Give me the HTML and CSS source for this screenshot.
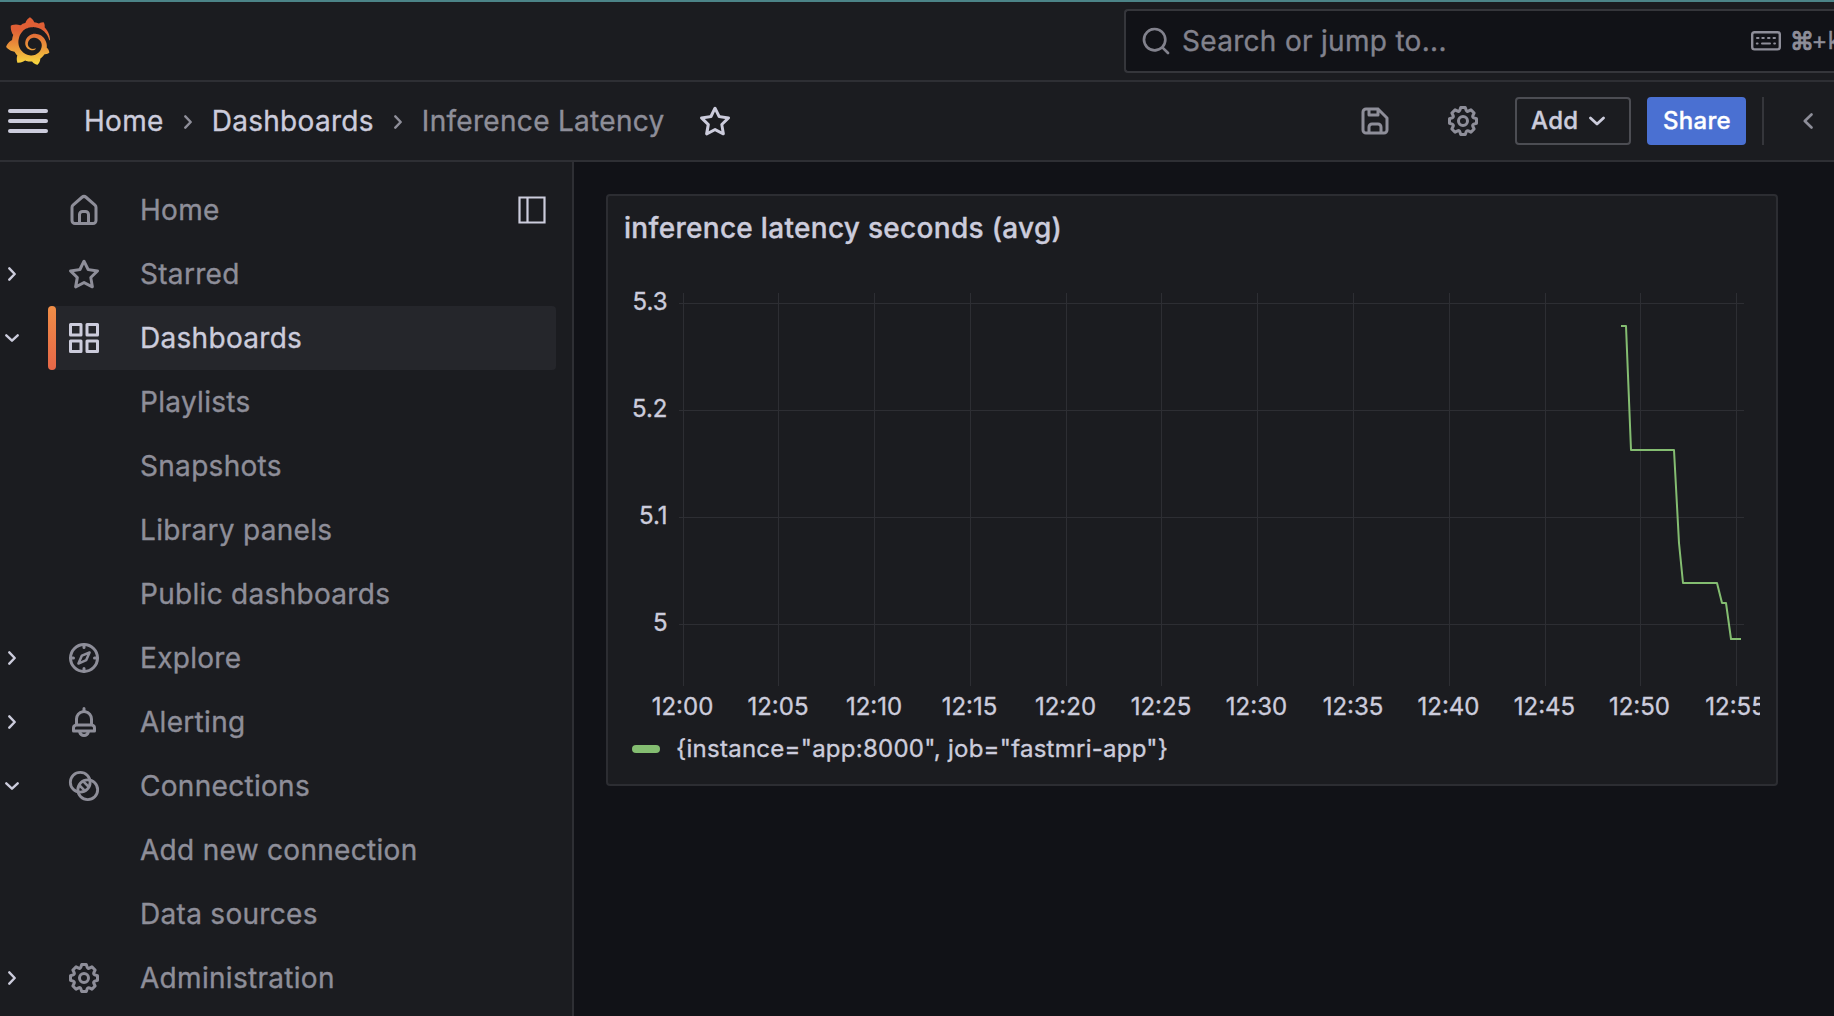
FILE: index.html
```html
<!DOCTYPE html>
<html lang="en">
<head>
<meta charset="utf-8">
<title>Inference Latency - Dashboards - Grafana</title>
<link rel="stylesheet" href="styles.css">
</head>
<body>
<svg class="sprite" aria-hidden="true">
  <symbol id="cog" viewBox="0 0 24 24"><path d="M21.32,9.55l-1.89-.63.89-1.78A1,1,0,0,0,20.13,6L18,3.87a1,1,0,0,0-1.15-.19l-1.78.89-.63-1.89A1,1,0,0,0,13.5,2h-3a1,1,0,0,0-.95.68L8.92,4.57,7.14,3.68A1,1,0,0,0,6,3.87L3.87,6a1,1,0,0,0-.19,1.15l.89,1.78-1.89.63A1,1,0,0,0,2,10.5v3a1,1,0,0,0,.68.95l1.89.63-.89,1.78A1,1,0,0,0,3.87,18L6,20.13a1,1,0,0,0,1.15.19l1.78-.89.63,1.89a1,1,0,0,0,.95.68h3a1,1,0,0,0,.95-.68l.63-1.89,1.78.89A1,1,0,0,0,18,20.13L20.13,18a1,1,0,0,0,.19-1.15l-.89-1.78,1.89-.63A1,1,0,0,0,22,13.5v-3A1,1,0,0,0,21.32,9.55ZM20,12.78l-1.2.4A2,2,0,0,0,17.64,16l.57,1.14-1.1,1.1L16,17.64a2,2,0,0,0-2.79,1.16l-.4,1.2H11.22l-.4-1.2A2,2,0,0,0,8,17.64l-1.14.57-1.1-1.1L6.36,16A2,2,0,0,0,5.2,13.18L4,12.78V11.22l1.2-.4A2,2,0,0,0,6.36,8L5.79,6.89l1.1-1.1L8,6.36A2,2,0,0,0,10.82,5.2l.4-1.2h1.56l.4,1.2A2,2,0,0,0,16,6.36l1.14-.57,1.1,1.1L17.64,8a2,2,0,0,0,1.16,2.79l1.2.4ZM12,8a4,4,0,1,0,4,4A4,4,0,0,0,12,8Zm0,6a2,2,0,1,1,2-2A2,2,0,0,1,12,14Z"/></symbol>
  <symbol id="star" viewBox="0 0 24 24"><path d="M22,9.67A1,1,0,0,0,21.14,9l-5.69-.83L12.9,3a1,1,0,0,0-1.8,0L8.55,8.16,2.86,9a1,1,0,0,0-.81.68,1,1,0,0,0,.25,1l4.13,4-1,5.68A1,1,0,0,0,6.9,21.44L12,18.77l5.1,2.67a.93.93,0,0,0,.46.12,1,1,0,0,0,.59-.19,1,1,0,0,0,.4-1l-1-5.68,4.13-4A1,1,0,0,0,22,9.67Zm-6.15,4a1,1,0,0,0-.29.88l.72,4.2-3.76-2a1.06,1.06,0,0,0-.94,0l-3.76,2,.72-4.2a1,1,0,0,0-.29-.88l-3-3,4.21-.61a1,1,0,0,0,.76-.55L12,5.7l1.88,3.82a1,1,0,0,0,.76.55l4.21.61Z"/></symbol>
  <symbol id="right" viewBox="0 0 8 14"><path class="line caret-line" d="M1.3 1.300 6.700 7 1.300 12.700"/></symbol>
  <symbol id="down" viewBox="0 0 14 8"><path class="line caret-line" d="M1.300 1.300 7 6.700 12.700 1.300"/></symbol>
</svg>

<header class="topbar">
  <svg class="logo" viewBox="0 0 351 365">
    <defs><linearGradient id="sun" gradientUnits="userSpaceOnUse" x1="175" y1="365" x2="175" y2="10"><stop offset="0" stop-color="#f8dc3f"/><stop offset=".3" stop-color="#eda33c"/><stop offset=".75" stop-color="#e05f35"/><stop offset="1" stop-color="#e05f35"/></linearGradient></defs>
    <path fill="url(#sun)" d="M342,161.2c-0.6-6.1-1.6-13.1-3.6-20.9c-2-7.7-5-16.2-9.4-25c-4.4-8.8-10.1-17.9-17.5-26.8c-2.9-3.5-6.1-6.9-9.5-10.2c5.1-20.3-6.2-37.9-6.2-37.9c-19.5-1.2-31.9,6.1-36.5,9.4c-0.8-0.3-1.5-0.7-2.3-1c-3.3-1.3-6.7-2.6-10.3-3.7c-3.5-1.1-7.1-2.1-10.8-3c-3.7-0.9-7.4-1.6-11.2-2.2c-0.7-0.1-1.3-0.2-2-0.3c-8.5-27.2-32.9-38.6-32.9-38.6c-27.3,17.3-32.4,41.5-32.4,41.5s-0.1,0.5-0.3,1.4c-1.5,0.4-3,0.9-4.5,1.3c-2.1,0.6-4.2,1.4-6.2,2.2c-2.1,0.8-4.1,1.6-6.2,2.5c-4.1,1.8-8.2,3.8-12.2,6c-3.9,2.2-7.7,4.6-11.4,7.1c-0.5-0.2-1-0.4-1-0.4c-37.8-14.4-71.3,2.9-71.3,2.9c-3.1,40.2,15.1,65.5,18.7,70.1c-0.9,2.5-1.7,5-2.5,7.5c-2.8,9.1-4.9,18.4-6.2,28.1c-0.2,1.4-0.4,2.8-0.5,4.2C18.8,192.7,8.5,228,8.5,228c29.1,33.5,63.1,35.6,63.1,35.6c0,0,0.1-0.1,0.1-0.1c4.3,7.7,9.3,15,14.9,21.9c2.4,2.9,4.8,5.6,7.4,8.3c-10.6,30.4,1.5,55.6,1.5,55.6c32.4,1.2,53.7-14.2,58.2-17.7c3.2,1.1,6.5,2.1,9.8,2.9c10,2.6,20.2,4.1,30.4,4.5c2.5,0.1,5.1,0.2,7.6,0.1l1.2,0l0.8,0l1.6,0l1.6-0.1l0,0.1c15.3,21.8,42.1,24.9,42.1,24.9c19.1-20.1,20.2-40.1,20.2-44.4l0,0c0,0,0-0.1,0-0.3c0-0.4,0-0.6,0-0.6l0,0c0-0.3,0-0.6,0-0.9c4-2.8,7.8-5.8,11.4-9.1c7.6-6.9,14.3-14.8,19.9-23.3c0.5-0.8,1-1.6,1.5-2.4c21.6,1.2,36.9-13.4,36.9-13.4c-3.6-22.5-16.4-33.5-19.1-35.6l0,0c0,0-0.1-0.1-0.3-0.2c-0.2-0.1-0.2-0.2-0.2-0.2c0,0,0,0,0,0c-0.1-0.1-0.3-0.2-0.5-0.3c0.1-1.4,0.2-2.7,0.3-4.1c0.2-2.4,0.2-4.9,0.2-7.3l0-1.8l0-0.9l0-0.5c0-0.6,0-0.4,0-0.6l-0.1-1.5l-0.1-2c0-0.7-0.1-1.3-0.2-1.9c-0.1-0.6-0.1-1.3-0.2-1.9l-0.2-1.9l-0.3-1.9c-0.4-2.5-0.8-4.9-1.4-7.4c-2.3-9.7-6.1-18.9-11-27.2c-5-8.3-11.2-15.6-18.3-21.8c-7-6.2-14.9-11.2-23.1-14.9c-8.3-3.7-16.9-6.1-25.5-7.2c-4.3-0.6-8.6-0.8-12.9-0.7l-1.6,0l-0.4,0c-0.1,0-0.6,0-0.5,0l-0.7,0l-1.6,0.1c-0.6,0-1.2,0.1-1.7,0.1c-2.2,0.2-4.4,0.5-6.5,0.9c-8.6,1.6-16.7,4.7-23.8,9c-7.1,4.3-13.3,9.6-18.3,15.6c-5,6-8.9,12.7-11.6,19.6c-2.7,6.9-4.2,14.1-4.6,21c-0.1,1.7-0.1,3.5-0.1,5.2c0,0.4,0,0.9,0,1.3l0.1,1.4c0.1,0.8,0.1,1.7,0.2,2.5c0.3,3.5,1,6.9,1.9,10.1c1.9,6.5,4.9,12.4,8.6,17.4c3.7,5,8.2,9.1,12.9,12.4c4.7,3.2,9.8,5.5,14.8,7c5,1.5,10,2.1,14.7,2.1c0.6,0,1.2,0,1.7,0c0.3,0,0.6,0,0.9,0c0.3,0,0.6,0,0.9-0.1c0.5,0,1-0.1,1.5-0.1c0.1,0,0.3,0,0.4-0.1l0.5-0.1c0.3,0,0.6-0.1,0.9-0.1c0.6-0.1,1.1-0.2,1.7-0.3c0.6-0.1,1.1-0.2,1.6-0.4c1.1-0.2,2.1-0.6,3.1-0.9c2-0.7,4-1.5,5.7-2.4c1.8-0.9,3.4-2,5-3c0.4-0.3,0.9-0.6,1.3-1c1.6-1.3,1.9-3.7,0.6-5.3c-1.1-1.4-3.1-1.8-4.7-0.9c-0.4,0.2-0.8,0.4-1.2,0.6c-1.4,0.7-2.8,1.3-4.3,1.8c-1.5,0.5-3.1,0.9-4.7,1.2c-0.8,0.1-1.6,0.2-2.5,0.3c-0.4,0-0.8,0.1-1.3,0.1c-0.4,0-0.9,0-1.2,0c-0.4,0-0.8,0-1.2,0c-0.5,0-1,0-1.5-0.1c0,0-0.3,0-0.1,0l-0.2,0l-0.3,0c-0.2,0-0.5,0-0.7-0.1c-0.5-0.1-0.9-0.1-1.4-0.2c-3.7-0.5-7.4-1.6-10.9-3.2c-3.6-1.6-7-3.8-10.1-6.6c-3.1-2.8-5.8-6.1-7.9-9.9c-2.1-3.8-3.6-8-4.3-12.4c-0.3-2.2-0.5-4.5-0.4-6.7c0-0.6,0.1-1.2,0.1-1.8c0,0.2,0-0.1,0-0.1l0-0.2l0-0.5c0-0.3,0.1-0.6,0.1-0.9c0.1-1.2,0.3-2.4,0.5-3.6c1.7-9.6,6.5-19,13.9-26.1c1.9-1.8,3.9-3.4,6-4.9c2.1-1.5,4.4-2.8,6.8-3.9c2.4-1.1,4.8-2,7.4-2.7c2.5-0.7,5.1-1.1,7.8-1.4c1.3-0.1,2.6-0.2,4-0.2c0.4,0,0.6,0,0.9,0l1.1,0l0.7,0c0.3,0,0,0,0.1,0l0.3,0l1.1,0.1c2.9,0.2,5.7,0.6,8.5,1.3c5.6,1.2,11.1,3.3,16.2,6.1c10.2,5.7,18.9,14.5,24.2,25.1c2.7,5.3,4.6,11,5.5,16.9c0.2,1.5,0.4,3,0.5,4.5l0.1,1.1l0.1,1.1c0,0.4,0,0.8,0,1.1c0,0.4,0,0.8,0,1.1l0,1l0,1.1c0,0.7-0.1,1.9-0.1,2.6c-0.1,1.6-0.3,3.3-0.5,4.9c-0.2,1.6-0.5,3.2-0.8,4.8c-0.3,1.6-0.7,3.2-1.1,4.7c-0.8,3.1-1.8,6.2-3,9.3c-2.4,6-5.6,11.8-9.4,17.1c-7.7,10.6-18.2,19.2-30.2,24.7c-6,2.7-12.3,4.7-18.8,5.7c-3.2,0.6-6.5,0.9-9.8,1l-0.6,0l-0.5,0l-1.1,0l-1.6,0l-0.8,0c0.4,0-0.1,0-0.1,0l-0.3,0c-1.8,0-3.5-0.1-5.3-0.3c-7-0.5-13.9-1.8-20.7-3.7c-6.7-1.9-13.2-4.6-19.4-7.8c-12.3-6.6-23.4-15.6-32-26.5c-4.3-5.4-8.1-11.3-11.2-17.4c-3.1-6.1-5.6-12.6-7.4-19.1c-1.8-6.6-2.9-13.3-3.4-20.1l-0.1-1.3l0-0.3l0-0.3l0-0.6l0-1.1l0-0.3l0-0.4l0-0.8l0-1.6l0-0.3c0,0,0,0.1,0-0.1l0-0.6c0-0.8,0-1.7,0-2.5c0.1-3.3,0.4-6.8,0.8-10.2c0.4-3.4,1-6.9,1.7-10.3c0.7-3.4,1.5-6.8,2.5-10.2c1.9-6.7,4.3-13.2,7.1-19.3c5.7-12.2,13.1-23.1,22-31.8c2.2-2.2,4.5-4.2,6.9-6.2c2.4-1.9,4.9-3.7,7.5-5.4c2.5-1.7,5.2-3.2,7.9-4.6c1.3-0.7,2.7-1.4,4.1-2c0.7-0.3,1.4-0.6,2.1-0.9c0.7-0.3,1.4-0.6,2.1-0.9c2.8-1.2,5.7-2.2,8.7-3.1c0.7-0.2,1.5-0.4,2.2-0.7c0.7-0.2,1.5-0.4,2.2-0.6c1.5-0.4,3-0.8,4.5-1.1c0.7-0.2,1.5-0.3,2.3-0.5c0.8-0.2,1.5-0.3,2.3-0.5c0.8-0.1,1.5-0.3,2.3-0.4l1.1-0.2l1.2-0.2c0.8-0.1,1.5-0.2,2.3-0.3c0.9-0.1,1.7-0.2,2.6-0.3c0.7-0.1,1.9-0.2,2.6-0.3c0.5-0.1,1.1-0.1,1.6-0.2l1.1-0.1l0.5-0.1l0.6,0c0.9-0.1,1.7-0.1,2.6-0.2l1.3-0.1c0,0,0.5,0,0.1,0l0.3,0l0.6,0c0.7,0,1.5-0.1,2.2-0.1c2.9-0.1,5.9-0.1,8.8,0c5.8,0.2,11.5,0.9,17,1.9c11.1,2.1,21.5,5.6,31,10.3c9.5,4.6,17.9,10.3,25.3,16.5c0.5,0.4,0.9,0.8,1.4,1.2c0.4,0.4,0.9,0.8,1.3,1.2c0.9,0.8,1.7,1.6,2.6,2.4c0.9,0.8,1.7,1.6,2.5,2.4c0.8,0.8,1.6,1.6,2.4,2.5c3.1,3.3,6,6.6,8.6,10c5.2,6.7,9.4,13.5,12.7,19.9c0.2,0.4,0.4,0.8,0.6,1.2c0.2,0.4,0.4,0.8,0.6,1.2c0.4,0.8,0.8,1.6,1.1,2.4c0.4,0.8,0.7,1.5,1.1,2.3c0.3,0.8,0.7,1.5,1,2.3c1.2,3,2.4,5.9,3.3,8.6c1.5,4.4,2.6,8.3,3.5,11.7c0.3,1.4,1.6,2.3,3,2.1c1.5-0.1,2.6-1.3,2.6-2.8C342.6,170.4,342.5,166.1,342,161.2z"/>
  </svg>
  <div class="search">
    <svg class="search-icon" viewBox="0 0 24 24"><path d="M21.71,20.29,18,16.61A9,9,0,1,0,16.61,18l3.68,3.68a1,1,0,0,0,1.42,0A1,1,0,0,0,21.71,20.29ZM11,18a7,7,0,1,1,7-7A7,7,0,0,1,11,18Z"/></svg>
    <span class="placeholder">Search or jump to...</span>
    <span class="shortcut">
      <svg class="keyboard" viewBox="0 0 30 20"><rect class="line" x="1.200" y="1.200" width="27.600" height="17.200" rx="2.400"/><path class="line keys" d="M6 7h1.500M11.300 7h1.500M17 7h1.500M22.500 7h1.500M5.800 12.400h.8M11 12.400h8M23.200 12.400h.8"/></svg>
      <span><span class="cmd">⌘</span>+k</span>
    </span>
  </div>
</header>

<nav class="toolbar">
  <span class="burger"><i></i><i></i><i></i></span>
  <a class="crumb">Home</a>
  <svg class="crumb-sep"><use href="#right"/></svg>
  <a class="crumb">Dashboards</a>
  <svg class="crumb-sep"><use href="#right"/></svg>
  <span class="crumb current">Inference Latency</span>
  <svg class="icon fav"><use href="#star"/></svg>
  <div class="actions">
    <svg class="icon save" viewBox="0 0 24 24"><path d="M20.71,9.29l-6-6a1,1,0,0,0-.32-.21A1.09,1.09,0,0,0,14,3H6A3,3,0,0,0,3,6V18a3,3,0,0,0,3,3H18a3,3,0,0,0,3-3V10A1,1,0,0,0,20.71,9.29ZM9,5h4V7H9Zm6,14H9V16a1,1,0,0,1,1-1h4a1,1,0,0,1,1,1Zm4-1a1,1,0,0,1-1,1H17V16a3,3,0,0,0-3-3H10a3,3,0,0,0-3,3v3H6a1,1,0,0,1-1-1V6A1,1,0,0,1,6,5H7V8A1,1,0,0,0,8,9h6a1,1,0,0,0,1-1V6.41l4,4Z"/></svg>
    <svg class="icon settings"><use href="#cog"/></svg>
    <button class="btn add">Add <svg class="add-caret"><use href="#down"/></svg></button>
    <button class="btn share">Share</button>
    <span class="divider"></span>
    <svg class="collapse" viewBox="0 0 10 16"><path class="line" d="M8.500 1.500 1.800 8l6.700 6.500"/></svg>
  </div>
</nav>

<div class="body">
  <aside class="sidebar">
    <div class="item"><span class="caret"></span>
      <div class="row"><svg class="icon" viewBox="0 0 24 24"><path d="M20,8h0L14,2.740a3,3,0,0,0-4,0L4,8a3,3,0,0,0-1,2.260V19a3,3,0,0,0,3,3H18a3,3,0,0,0,3-3V10.250A3,3,0,0,0,20,8ZM14,20H10V15a1,1,0,0,1,1-1h2a1,1,0,0,1,1,1Zm5-1a1,1,0,0,1-1,1H16V15a3,3,0,0,0-3-3H11a3,3,0,0,0-3,3v5H6a1,1,0,0,1-1-1V10.250a1,1,0,0,1,.34-.75l6-5.250a1,1,0,0,1,1.320,0l6,5.250a1,1,0,0,1,.34.75Z"/></svg>Home
      <svg class="dock" viewBox="0 0 28 28"><path class="line" d="M1.500 1.500h25v25h-25zM9.500 1.500v25"/></svg></div></div>
    <div class="item"><span class="caret"><svg class="right"><use href="#right"/></svg></span>
      <div class="row"><svg class="icon"><use href="#star"/></svg>Starred</div></div>
    <div class="item"><span class="caret"><svg class="down"><use href="#down"/></svg></span>
      <div class="row active"><svg class="icon" viewBox="0 0 24 24"><path d="M10,13H3a1,1,0,0,0-1,1v7a1,1,0,0,0,1,1h7a1,1,0,0,0,1-1V14A1,1,0,0,0,10,13ZM9,20H4V15H9ZM21,2H14a1,1,0,0,0-1,1v7a1,1,0,0,0,1,1h7a1,1,0,0,0,1-1V3A1,1,0,0,0,21,2ZM20,9H15V4h5Zm1,4H14a1,1,0,0,0-1,1v7a1,1,0,0,0,1,1h7a1,1,0,0,0,1-1V14A1,1,0,0,0,21,13Zm-1,7H15V15h5ZM10,2H3A1,1,0,0,0,2,3v7a1,1,0,0,0,1,1h7a1,1,0,0,0,1-1V3A1,1,0,0,0,10,2ZM9,9H4V4H9Z"/></svg>Dashboards</div></div>
    <div class="item child">Playlists</div>
    <div class="item child">Snapshots</div>
    <div class="item child">Library panels</div>
    <div class="item child">Public dashboards</div>
    <div class="item"><span class="caret"><svg class="right"><use href="#right"/></svg></span>
      <div class="row"><svg class="icon" viewBox="0 0 24 24"><path class="line thick" d="M12 3v2M12 19v2M3 12h2M19 12h2"/><circle class="line thick" cx="12" cy="12" r="9"/><path class="line" d="M15.700 8.300 10.600 10.400 8.300 15.700 13.500 13.400Z"/></svg>Explore</div></div>
    <div class="item"><span class="caret"><svg class="right"><use href="#right"/></svg></span>
      <div class="row"><svg class="icon" viewBox="0 0 24 24"><path d="M18,13.180V10a6,6,0,0,0-5-5.910V3a1,1,0,0,0-2,0V4.090A6,6,0,0,0,6,10v3.180A3,3,0,0,0,4,16v2a1,1,0,0,0,1,1H8.140a4,4,0,0,0,7.720,0H19a1,1,0,0,0,1-1V16A3,3,0,0,0,18,13.180ZM8,10a4,4,0,0,1,8,0v3H8Zm4,10a2,2,0,0,1-1.720-1h3.440A2,2,0,0,1,12,20Zm6-3H6V16a1,1,0,0,1,1-1H17a1,1,0,0,1,1,1Z"/></svg>Alerting</div></div>
    <div class="item"><span class="caret"><svg class="down"><use href="#down"/></svg></span>
      <div class="row"><svg class="icon" viewBox="0 0 24 24"><circle class="line link" cx="9.500" cy="9.500" r="6.600"/><circle class="line link" cx="14.500" cy="14.500" r="6.600"/><path class="line" d="M12 9.400l2.600 2.600M9.400 12l2.600 2.600"/></svg>Connections</div></div>
    <div class="item child">Add new connection</div>
    <div class="item child">Data sources</div>
    <div class="item"><span class="caret"><svg class="right"><use href="#right"/></svg></span>
      <div class="row"><svg class="icon"><use href="#cog"/></svg>Administration</div></div>
  </aside>

  <main class="canvas">
    <section class="panel">
      <h2 class="panel-title">inference latency seconds (avg)</h2>
      <svg class="plot" viewBox="624 260 1136 464" width="1136" height="464">
        <g class="grid">
          <path d="M679 303.500H1744M679 410.500H1744M679 517.500H1744M679 624.500H1744"/>
          <path d="M683.500 293V686M778.500 293V686M874.500 293V686M970.500 293V686M1066.500 293V686M1161.500 293V686M1257.500 293V686M1353.500 293V686M1449.500 293V686M1545.500 293V686M1640.500 293V686M1736.500 293V686"/>
        </g>
        <polyline class="series" points="1621,326 1626,326 1631,450 1674,450 1679,543 1683,583 1717,583 1722,603 1726,603 1731,639 1741,639"/>
        <g class="ticks y"><text x="667.500" y="310">5.3</text><text x="667.500" y="417">5.2</text><text x="667.500" y="524">5.1</text><text x="667.500" y="631">5</text></g>
        <g class="ticks x"><text x="682.500" y="715">12:00</text><text x="778" y="715">12:05</text><text x="874" y="715">12:10</text><text x="969.500" y="715">12:15</text><text x="1065.500" y="715">12:20</text><text x="1161" y="715">12:25</text><text x="1256.500" y="715">12:30</text><text x="1353" y="715">12:35</text><text x="1448.500" y="715">12:40</text><text x="1544.500" y="715">12:45</text><text x="1639.500" y="715">12:50</text><text x="1735.500" y="715">12:55</text></g>
      </svg>
      <div class="legend"><i class="swatch"></i>{instance="app:8000", job="fastmri-app"}</div>
    </section>
  </main>
</div>
</body>
</html>
```
FILE: styles.css
```css
* { box-sizing: border-box; }
body {
  margin: 0;
  width: 1834px;
  height: 1016px;
  overflow: hidden;
  display: flex;
  flex-direction: column;
  background: #111217;
  color: #ccccdc;
  font: 400 28px/44px Inter, "Liberation Sans", sans-serif;
  letter-spacing: 0.3px;
  -webkit-text-stroke: 0.35px currentColor;
}
svg { fill: currentColor; flex: none; display: block; }
.sprite { width: 0; height: 0; position: absolute; }
.line { fill: none; stroke: currentColor; stroke-width: 1.7; stroke-linecap: round; stroke-linejoin: round; }
.thick { stroke-width: 2; }
.link { stroke-width: 1.9; }
.caret-line { stroke-width: 2.4; }
.icon { width: 36px; height: 36px; }

.topbar {
  height: 82px;
  flex: none;
  display: flex;
  align-items: center;
  background: #1b1c20;
  border-top: 2px solid #4c8488;
  border-bottom: 2px solid #2e2f34;
}
.logo { width: 46px; height: 48px; margin-left: 5px; }
.search {
  width: 710px;
  height: 64px;
  flex: none;
  margin-left: 1073px;
  padding-left: 14px;
  display: flex;
  align-items: center;
  overflow: hidden;
  background: #111217;
  border: 2px solid #35363b;
  border-right: 0;
  border-radius: 4px 0 0 4px;
  color: #82828d;
}
.search-icon { width: 32px; height: 32px; }
.placeholder { margin-left: 10px; width: 569px; flex: none; }
.shortcut { display: flex; align-items: center; gap: 9px; font-size: 24px; color: #8e8e99; white-space: nowrap; }
.cmd { letter-spacing: -2.5px; -webkit-text-stroke-width: 0.9px; }
.keyboard { width: 30px; height: 20px; }
.keyboard .line { stroke-width: 2.4; }
.keyboard .keys { stroke-width: 2; }

.toolbar {
  height: 80px;
  flex: none;
  padding-left: 8px;
  display: flex;
  align-items: center;
  background: #1b1c20;
  border-bottom: 2px solid #2e2f34;
}
.burger { width: 40px; display: grid; gap: 6px; margin-right: 36px; }
.burger i { height: 4px; border-radius: 2px; background: #ccccdc; }
.crumb-sep { width: 8px; height: 14px; margin: 2px 20px 0 20px; color: #8e8e99; }
.current { color: #8e8e99; }
.fav { margin-left: 32px; }
.actions { margin-left: auto; display: flex; align-items: center; color: #8e8e99; padding-right: 21px; }
.settings { margin: 0 34px 0 52px; }
.btn {
  height: 48px;
  padding: 0 14px;
  display: flex;
  align-items: center;
  border: 2px solid #4c4d53;
  border-radius: 4px;
  background: none;
  color: #ccccdc;
  font: 500 24px/44px Inter, "Liberation Sans", sans-serif;
  letter-spacing: 0.3px;
}
.add { width: 116px; }
.add-caret { width: 16px; height: 10px; margin-left: 11px; }
.share { width: 99px; margin: 0 16px; background: #4a70d2; border-color: #4a70d2; color: #fff; }
.divider { width: 2px; height: 48px; background: #35363b; margin-right: 39px; }
.collapse { width: 10px; height: 16px; }
.collapse .line { stroke-width: 2.6; }

.body { flex: 1; display: flex; min-height: 0; }
.sidebar {
  width: 574px;
  flex: none;
  padding-top: 16px;
  background: #1b1c20;
  border-right: 2px solid #2e2f34;
  color: #8e8e99;
}
.item { height: 64px; display: flex; align-items: center; }
.child { padding-left: 140px; }
.caret { width: 48px; color: #ccccdc; }
.right { width: 8px; height: 14px; margin-left: 8px; }
.down { width: 14px; height: 8px; margin-left: 5px; }
.row {
  width: 508px;
  height: 64px;
  padding-left: 18px;
  display: flex;
  align-items: center;
  border-radius: 4px;
}
.row > .icon { margin-right: 38px; }
.active { padding-left: 0; background: #25262b; color: #ccccdc; }
.active::before {
  content: "";
  width: 8px;
  height: 64px;
  margin-right: 10px;
  border-radius: 4px;
  background: linear-gradient(#f08e47, #e76748);
}
.dock { width: 28px; height: 28px; margin: 0 10px 0 auto; color: #ccccdc; }
.dock .line { stroke-width: 2.2; stroke-linejoin: miter; }

.canvas { flex: 1; padding: 32px 0 0 32px; }
.panel {
  width: 1172px;
  height: 592px;
  padding: 0 16px;
  background: #1b1c20;
  border: 2px solid #2c2d32;
  border-radius: 4px;
}
.panel-title { margin: 0; height: 64px; font: 500 28px/64px Inter, "Liberation Sans", sans-serif; letter-spacing: 0.3px; }
.plot { letter-spacing: 0; }
.grid { stroke: #2d2e33; fill: none; }
.series { fill: none; stroke: #84bd71; stroke-width: 2; stroke-linejoin: round; }
.ticks { font-size: 24px; fill: #ccccdc; }
.ticks text { -webkit-text-stroke: 0; stroke: #ccccdc; stroke-width: 0.35px; }
.ticks.x { text-anchor: middle; }
.ticks.y { text-anchor: end; }
.legend { display: flex; align-items: center; gap: 16px; padding-left: 8px; font-size: 24px; height: 50px; letter-spacing: 0.26px; }
.swatch { width: 28px; height: 8px; border-radius: 4px; background: #84bd71; }
```
